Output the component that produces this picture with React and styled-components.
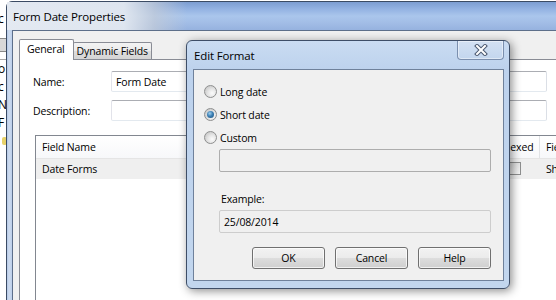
import React from "react";
import styled, { createGlobalStyle } from "styled-components";

const GlobalStyle = createGlobalStyle`
  body { margin: 0; background: #fff; }
  * { box-sizing: border-box; }
`;

const Desktop = styled.div`
  position: relative;
  width: 556px;
  height: 300px;
  overflow: hidden;
  background: #fff;
  font-family: "Open Sans", "Noto Sans", sans-serif;
  font-size: 10.5px;
  letter-spacing: -0.15px;
  color: #000;
`;

/* window peeking out behind, on the left edge */
const BehindStrip = styled.div`
  position: absolute;
  left: 0;
  top: 0;
  width: 7px;
  height: 300px;
  background: #fff;
  overflow: hidden;
  display: flex;
  flex-direction: column;
`;

const BehindGlyph = styled.span`
  height: ${(p) => p.$h || 18}px;
  line-height: ${(p) => p.$h || 18}px;
  margin-top: ${(p) => p.$mt || 0}px;
  margin-left: -2px;
  font-size: 12px;
  white-space: nowrap;
`;

const BehindBox = styled.div`
  height: 14px;
  margin-top: ${(p) => p.$mt || 0}px;
  border: 1px solid #8a8a8a;
  border-left: none;
  background: #d8d8d8;
`;

const BehindLine = styled.div`
  margin-top: ${(p) => p.$mt || 0}px;
  border-top: 1px solid #a8a8a8;
`;

const BehindBlob = styled.div`
  width: 5px;
  height: 8px;
  margin: 5px 0 0 2px;
  border-radius: 2px;
  background: #e8d26a;
`;

/* main window */
const MainWindow = styled.div`
  position: absolute;
  left: 6px;
  top: 1px;
  width: 640px;
  height: 340px;
  border: 1px solid #3b4b64;
  border-radius: 6px 6px 0 0;
  background: linear-gradient(90deg, #b3c8e6 0, #cfdcef 2px, #bccfea 5px, #bccfea 100%);
  padding: 0 5px;
  display: flex;
  flex-direction: column;
`;

const MainTitleBar = styled.div`
  height: 28px;
  margin: 0 -5px;
  display: flex;
  align-items: stretch;
  border-radius: 5px 5px 0 0;
  background: linear-gradient(180deg, #7c9dd1 0%, #93b2e2 25%, #aac6ec 50%, #a2bde6 75%, #96b2df 100%);
`;

const MainTitle = styled.span`
  width: 180px;
  padding: 1px 0 0 6px;
  display: flex;
  align-items: center;
  font-size: 11.5px;
  background: linear-gradient(90deg, rgba(230, 235, 242, 0.97) 0, rgba(226, 232, 240, 0.95) 65%, rgba(196, 204, 216, 0.7) 82%, rgba(170, 190, 220, 0) 100%);
`;

const MainClient = styled.div`
  flex: 1;
  border: 1px solid #5d6f8a;
  background: #f0f0f0;
  padding: 8px 6px 0;
  display: flex;
  flex-direction: column;
`;

const TabStrip = styled.div`
  height: 20px;
  display: flex;
  align-items: flex-end;
`;

const Tab = styled.div`
  height: ${(p) => (p.$active ? 21 : 17)}px;
  margin-bottom: ${(p) => (p.$active ? -1 : 0)}px;
  margin-left: ${(p) => (p.$active ? 0 : -1)}px;
  padding: ${(p) => (p.$active ? "0 8px 2px 7px" : "0 3px")};
  border: 1px solid #898c95;
  border-bottom: none;
  border-radius: 2px 2px 0 0;
  background: ${(p) =>
    p.$active ? "#fff" : "linear-gradient(180deg, #f3f3f3 0%, #ebebeb 50%, #dedede 51%, #d4d4d4 100%)"};
  position: relative;
  z-index: ${(p) => (p.$active ? 2 : 1)};
  display: flex;
  align-items: center;
  white-space: nowrap;
`;

const TabPage = styled.div`
  flex: 1;
  border: 1px solid #898c95;
  background: #fff;
  padding: 11px 0 0 13px;
`;

const FormGrid = styled.div`
  display: grid;
  grid-template-columns: 78px 436px;
  row-gap: 8px;
  align-items: center;
`;

const TextBox = styled.div`
  height: 21px;
  border: 1px solid;
  border-color: #abadb3 #dbdfe6 #e3e9ef #e2e3ea;
  border-radius: 2px;
  background: #fff;
  padding-left: 4px;
  display: flex;
  align-items: center;
`;

const ListView = styled.div`
  margin: 14px 0 0 2px;
  height: 200px;
  border: 1px solid #828790;
  background: #fff;
`;

const ListRow = styled.div`
  display: grid;
  grid-template-columns: 453px 51px 200px;
  height: ${(p) => (p.$header ? 23 : 20)}px;
  background: ${(p) => (p.$header ? "linear-gradient(180deg, #ffffff, #f7f8fa)" : "#efefef")};
  border-bottom: 1px solid ${(p) => (p.$header ? "#e5e5e5" : "#efefef")};
`;

const Cell = styled.div`
  padding-left: 6px;
  display: flex;
  align-items: center;
  justify-content: ${(p) => (p.$center ? "center" : "flex-start")};
  border-right: ${(p) => (p.$header ? "1px solid #e1e3e6" : "none")};
  white-space: nowrap;
  overflow: hidden;
`;

const CheckBox = styled.span`
  width: 13px;
  height: 13px;
  margin-left: -6px;
  border: 1px solid #8e8f8f;
  background: linear-gradient(135deg, #d6d6d6, #f6f6f6);
`;

/* Edit Format dialog */
const Dialog = styled.div`
  position: absolute;
  left: 186px;
  top: 40px;
  width: 324px;
  height: 249px;
  border: 1px solid #3e4e67;
  border-radius: 6px;
  background: linear-gradient(180deg, #cadcf2 0, #bdd2ed 28px, #c2d6ee 100%);
  padding: 0 5px 7px 6px;
  box-shadow: 2px 2px 10px rgba(0, 0, 0, 0.45);
  display: flex;
  flex-direction: column;
  z-index: 10;
`;

const DialogTitleBar = styled.div`
  height: 28px;
  display: flex;
  align-items: flex-start;
  justify-content: space-between;
`;

const DialogTitle = styled.span`
  padding: 1px 0 0 1px;
  line-height: 28px;
  font-size: 11.5px;
`;

const CloseButton = styled.div`
  width: 47px;
  height: 19px;
  border: 1px solid #7b8fae;
  border-top: none;
  border-radius: 0 0 4px 4px;
  background: linear-gradient(180deg, #d3e1f3, #c3d6ee);
  box-shadow: inset 0 0 0 1px rgba(255, 255, 255, 0.45);
  display: flex;
  align-items: center;
  justify-content: center;
`;

const DialogClient = styled.div`
  flex: 1;
  border: 1px solid #6f819b;
  background: #f0f0f0;
  padding: 10px 11px 11px 10px;
  display: flex;
  flex-direction: column;
`;

const RadioRow = styled.label`
  height: 23px;
  display: flex;
  align-items: center;
  gap: 3px;
`;

const RadioCircle = styled.span`
  width: 13px;
  height: 13px;
  border-radius: 50%;
  border: 1px solid #8e8f8f;
  background: radial-gradient(circle at 65% 65%, #fbfbfb 0, #e6e6e6 40%, #cdcdcd 75%, #eeeeee 100%);
  display: flex;
  align-items: center;
  justify-content: center;

  &::after {
    content: "";
    display: ${(p) => (p.$checked ? "block" : "none")};
    width: 7px;
    height: 7px;
    border-radius: 50%;
    background: radial-gradient(circle at 40% 35%, #9fd0f0 0, #3c7fb3 45%, #1d4f7a 100%);
  }
`;

const Field = styled.div`
  width: 272px;
  height: 23px;
  margin-left: 15px;
  margin-top: ${(p) => p.$mt || 0}px;
  border: 1px solid ${(p) => (p.$light ? "#cdcdcd" : "#adadad")};
  border-radius: 2px;
  background: #f0f0f0;
  padding-left: 4px;
  display: flex;
  align-items: center;
`;

const FieldLabel = styled.div`
  margin: 19px 0 0 17px;
  height: 16px;
  line-height: 16px;
`;

const ButtonRow = styled.div`
  margin-top: auto;
  padding-right: 1px;
  display: flex;
  justify-content: flex-end;
  gap: 10px;
`;

const Button = styled.button`
  width: 73px;
  height: 22px;
  border: 1px solid #707070;
  border-radius: 3px;
  background: linear-gradient(180deg, #f2f2f2 0%, #ebebeb 50%, #dddddd 51%, #cfcfcf 100%);
  box-shadow: inset 0 0 0 1px rgba(255, 255, 255, 0.7);
  font-family: inherit;
  font-size: 10.5px;
  letter-spacing: -0.15px;
  color: #000;
  padding: 0;
`;

const CloseGlyph = () => (
  <svg width="14" height="12" viewBox="0 0 14 12">
    <path d="M3 2 L11 10 M11 2 L3 10" stroke="#4a5870" strokeWidth="4" strokeLinecap="square" />
    <path d="M3 2 L11 10 M11 2 L3 10" stroke="#fff" strokeWidth="2" strokeLinecap="square" />
  </svg>
);

const formats = [
  { label: "Long date", checked: false },
  { label: "Short date", checked: true },
  { label: "Custom", checked: false },
];

export default function App() {
  return (
    <Desktop>
      <GlobalStyle />
      <BehindStrip>
        <BehindGlyph $h={14} $mt={12}>c</BehindGlyph>
        <BehindBox $mt={12} />
        <BehindLine $mt={7} />
        <BehindGlyph>o</BehindGlyph>
        <BehindGlyph>c</BehindGlyph>
        <BehindGlyph>N</BehindGlyph>
        <BehindGlyph>F</BehindGlyph>
        <BehindBlob />
      </BehindStrip>

      <MainWindow>
        <MainTitleBar>
          <MainTitle>Form Date Properties</MainTitle>
        </MainTitleBar>
        <MainClient>
          <TabStrip>
            <Tab $active>General</Tab>
            <Tab>Dynamic Fields</Tab>
          </TabStrip>
          <TabPage>
            <FormGrid>
              <span>Name:</span>
              <TextBox>Form Date</TextBox>
              <span>Description:</span>
              <TextBox />
            </FormGrid>
            <ListView>
              <ListRow $header>
                <Cell $header>Field Name</Cell>
                <Cell $header>Indexed</Cell>
                <Cell $header>Field Type</Cell>
              </ListRow>
              <ListRow>
                <Cell>Date Forms</Cell>
                <Cell $center>
                  <CheckBox />
                </Cell>
                <Cell>Short date</Cell>
              </ListRow>
            </ListView>
          </TabPage>
        </MainClient>
      </MainWindow>

      <Dialog>
        <DialogTitleBar>
          <DialogTitle>Edit Format</DialogTitle>
          <CloseButton>
            <CloseGlyph />
          </CloseButton>
        </DialogTitleBar>
        <DialogClient>
          {formats.map((f) => (
            <RadioRow key={f.label}>
              <RadioCircle $checked={f.checked} />
              {f.label}
            </RadioRow>
          ))}
          <Field />
          <FieldLabel>Example:</FieldLabel>
          <Field $mt={3} $light>25/08/2014</Field>
          <ButtonRow>
            <Button>OK</Button>
            <Button>Cancel</Button>
            <Button>Help</Button>
          </ButtonRow>
        </DialogClient>
      </Dialog>
    </Desktop>
  );
}
